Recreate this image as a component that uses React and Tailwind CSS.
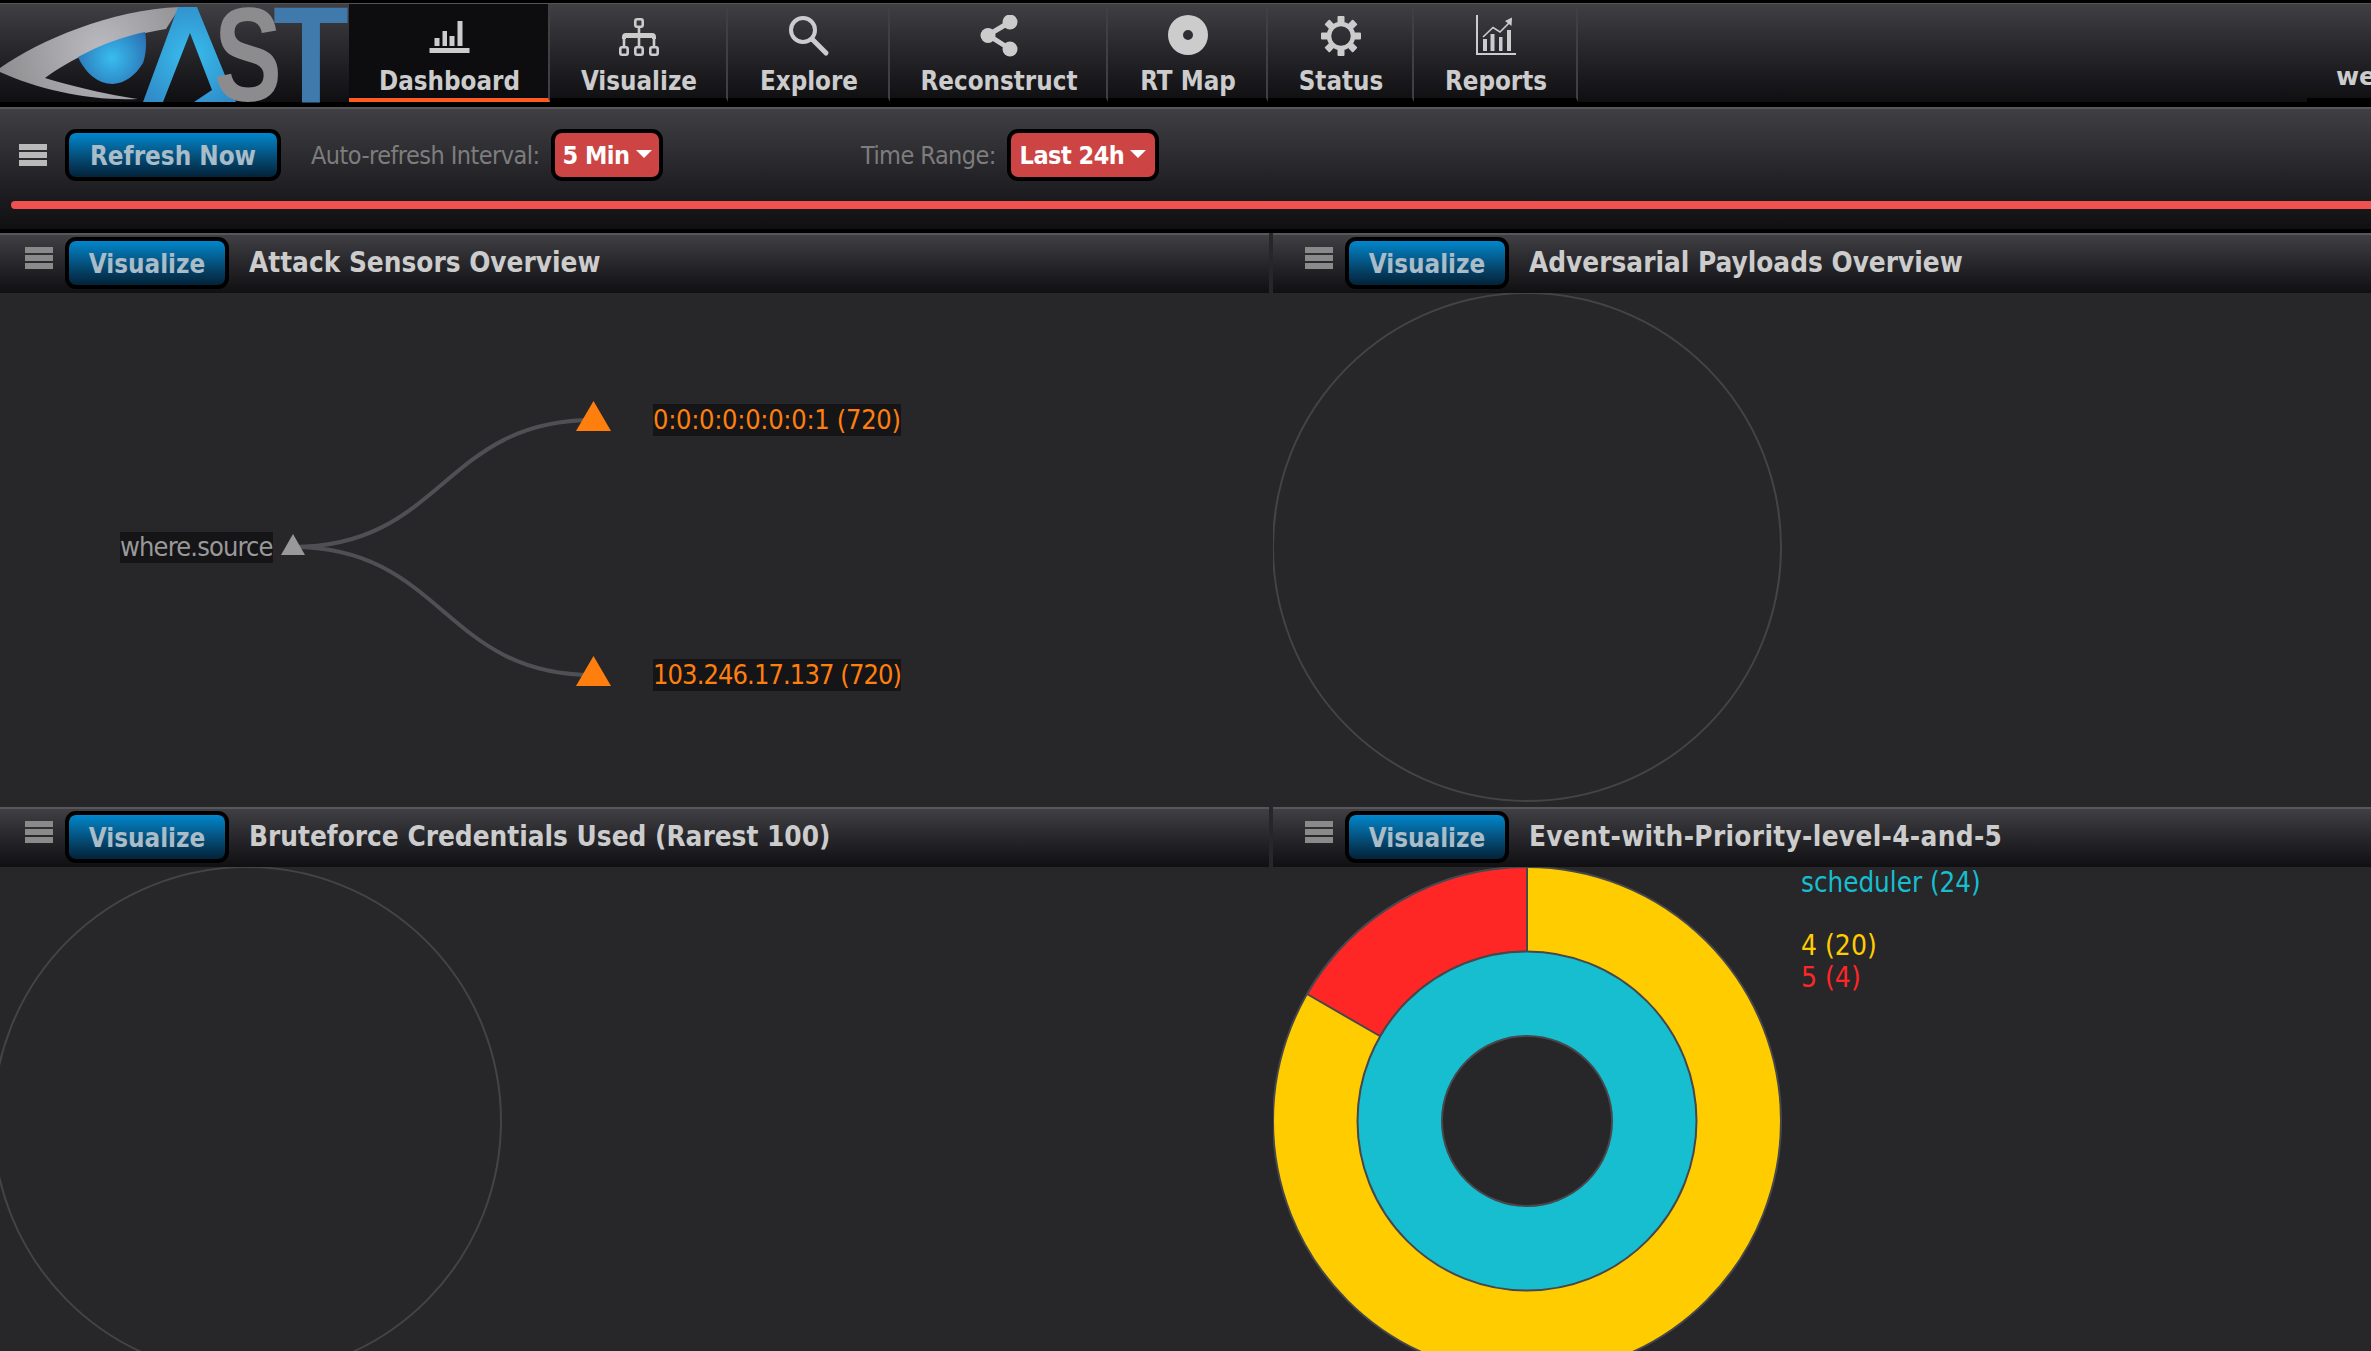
import React from "react";

const FONT = "font-['DejaVu_Sans_Condensed','DejaVu_Sans',sans-serif]";

function Icon({ children }) {
  return (
    <svg viewBox="0 0 44 42" className="w-[44px] h-[42px] block" fill="#cccccc" stroke="none">
      {children}
    </svg>
  );
}

const BarsIcon = () => (
  <Icon>
    <rect x="1.5" y="33" width="40" height="5" />
    <rect x="6.5" y="23" width="5" height="8" />
    <rect x="14.5" y="16" width="4.5" height="15" />
    <rect x="21.5" y="21" width="5" height="10" />
    <rect x="29.5" y="6" width="5" height="25" />
  </Icon>
);
const SitemapIcon = () => (
  <Icon>
    <g fill="none" stroke="#cccccc" strokeWidth="2.6">
      <rect x="18.3" y="4.3" width="7.4" height="7.4" rx="1.6" />
      <rect x="3.3" y="32.3" width="7.4" height="7.4" rx="1.6" />
      <rect x="18.3" y="32.3" width="7.4" height="7.4" rx="1.6" />
      <rect x="33.3" y="32.3" width="7.4" height="7.4" rx="1.6" />
      <path d="M22 12V31M7 31V23M37 31V23" />
    </g>
    <path d="M9 18H35Q39 18 39 22V24H35V23H9V24H5V22Q5 18 9 18Z" />
  </Icon>
);
const SearchIcon = () => (
  <Icon>
    <g fill="none" stroke="#cccccc">
      <circle cx="16" cy="15" r="12" strokeWidth="4" />
      <path d="M25.5 24.5L39 38" strokeWidth="5" strokeLinecap="round" />
    </g>
  </Icon>
);
const ShareIcon = () => (
  <Icon>
    <path d="M33 7L11 20L33 34" fill="none" stroke="#cccccc" strokeWidth="5" />
    <circle cx="33" cy="7" r="7.5" />
    <circle cx="11" cy="20.5" r="7.5" />
    <circle cx="33" cy="34" r="7.5" />
  </Icon>
);
const DiscIcon = () => (
  <Icon>
    <path
      fillRule="evenodd"
      d="M22 0a20 20 0 1 0 0 40a20 20 0 1 0 0-40ZM22 15a5 5 0 1 1 0 10a5 5 0 1 1 0-10Z"
    />
  </Icon>
);
const GearIcon = () => (
  <Icon>
    <circle cx="22" cy="21" r="12" fill="none" stroke="#cccccc" strokeWidth="4.5" />
    {[0, 45, 90, 135, 180, 225, 270, 315].map((a) => (
      <rect key={a} x="18.5" y="1" width="7" height="7" rx="1" transform={`rotate(${a} 22 21)`} />
    ))}
  </Icon>
);
const ReportsIcon = () => (
  <Icon>
    <rect x="2" y="0" width="2" height="40" />
    <rect x="2" y="38" width="40" height="2" />
    <rect x="9" y="24" width="4" height="12" />
    <rect x="16.5" y="19" width="4" height="17" />
    <rect x="25" y="22" width="3.5" height="14" />
    <rect x="33" y="15" width="4" height="21" />
    <path d="M9 22L19 12.5L26 17L36 7" fill="none" stroke="#cccccc" strokeWidth="1.6" />
    <path d="M31 6L38 2.5L37.5 11Z" />
  </Icon>
);

const NAV = [
  { label: "Dashboard", w: "w-[201px]", icon: <BarsIcon />, active: true },
  { label: "Visualize", w: "w-[178px]", icon: <SitemapIcon /> },
  { label: "Explore", w: "w-[162px]", icon: <SearchIcon /> },
  { label: "Reconstruct", w: "w-[218px]", icon: <ShareIcon /> },
  { label: "RT Map", w: "w-[160px]", icon: <DiscIcon /> },
  { label: "Status", w: "w-[146px]", icon: <GearIcon /> },
  { label: "Reports", w: "w-[164px]", icon: <ReportsIcon /> },
];

function Logo() {
  return (
    <svg viewBox="0 0 349 99" className="w-[349px] h-[99px] block shrink-0">
      <defs>
        <radialGradient id="gEye" gradientUnits="userSpaceOnUse" cx="100" cy="45" r="110">
          <stop offset="0" stopColor="#b9b9bf" />
          <stop offset="1" stopColor="#8b8b8d" />
        </radialGradient>
        <radialGradient id="gIris" gradientUnits="userSpaceOnUse" cx="112" cy="54" r="42">
          <stop offset="0" stopColor="#38bdf0" />
          <stop offset="1" stopColor="#2a6cae" />
        </radialGradient>
        <radialGradient id="gA" gradientUnits="userSpaceOnUse" cx="190" cy="52" r="70">
          <stop offset="0" stopColor="#38bdee" />
          <stop offset="1" stopColor="#2f82c0" />
        </radialGradient>
        <radialGradient id="gS" gradientUnits="userSpaceOnUse" cx="255" cy="50" r="55">
          <stop offset="0" stopColor="#c4c4ca" />
          <stop offset="1" stopColor="#8c8c8e" />
        </radialGradient>
        <radialGradient id="gT" gradientUnits="userSpaceOnUse" cx="311" cy="52" r="55">
          <stop offset="0" stopColor="#38c0f0" />
          <stop offset="1" stopColor="#4079ab" />
        </radialGradient>
      </defs>
      <path
        d="M0 64C40 36 110 6 180 3L166 25C120 32 78 50 45 74C70 82 110 91 138 95C90 97 40 86 0 68Z"
        fill="url(#gEye)"
      />
      <path
        d="M78 53C100 41 125 32 145 28C147 38 146 51 143 59C135 72 125 79 113 80C97 80 85 68 78 53Z"
        fill="url(#gIris)"
      />
      <polygon points="178,3 197,3 236,98 194,98 212,86 190,29 163,98 143,98" fill="url(#gA)" />
      <text
        transform="translate(214,96.5) scale(0.76,1)"
        fontFamily="'Liberation Sans',sans-serif"
        fontWeight="700"
        fontSize="134"
        fill="url(#gS)"
      >
        S
      </text>
      <text
        transform="translate(273,98) scale(0.9,1)"
        fontFamily="'Liberation Sans',sans-serif"
        fontWeight="700"
        fontSize="138"
        fill="url(#gT)"
      >
        T
      </text>
    </svg>
  );
}

function NavItem({ item }) {
  const under = item.active ? "border-b-[#ff5a1f] bg-[#0d0d0f]" : "border-b-black";
  return (
    <div
      className={`${item.w} h-full flex flex-col items-center pt-[11px] pl-[2px] border-b-4 ${under} border-r-2 border-r-[#404043] box-border`}
    >
      {item.icon}
      <span className="mt-[9px] text-[25.7px] leading-[30px] font-bold text-[#cccccc] whitespace-nowrap">
        {item.label}
      </span>
    </div>
  );
}

function Hamburger({ light }) {
  const c = light ? "bg-[#b9b9b9]" : "bg-[#8a8a8a]";
  return (
    <div className="w-[28px] h-[22px] flex flex-col gap-[2px] shrink-0">
      <div className={`h-[6px] ${c}`} />
      <div className={`h-[6px] ${c}`} />
      <div className={`h-[6px] ${c}`} />
    </div>
  );
}

function BlueButton({ children, w }) {
  return (
    <div
      className={`${w} h-[52px] shrink-0 rounded-[11px] border-4 border-black bg-linear-to-b from-[#0087cc] to-[#03233a] flex items-center justify-center pt-[2px] text-[25.8px] font-bold text-[#a9bcc8] box-border`}
    >
      {children}
    </div>
  );
}

function RedButton({ children, w }) {
  return (
    <div
      className={`${w} h-[52px] shrink-0 rounded-[11px] border-4 border-black bg-[#cc4444] flex items-center justify-center gap-[6px] pt-[2px] text-[25px] tracking-[-0.5px] font-bold text-white box-border`}
    >
      <span>{children}</span>
      <span className="w-0 h-0 border-x-[8px] border-x-transparent border-t-[8px] border-t-white mb-[5px]" />
    </div>
  );
}

function PanelHeader({ title, right, extra }) {
  return (
    <div className="h-[60px] border-t-2 border-[#56565b] bg-linear-to-b from-[#403f44] to-[#101013] flex items-start box-border shrink-0">
      <div className={right ? "ml-[32px] mt-[12px]" : "ml-[25px] mt-[12px]"}>
        <Hamburger />
      </div>
      <div className="ml-[12px] mt-[2px]">
        <BlueButton w="w-[164px]">Visualize</BlueButton>
      </div>
      <span
        className={`${right ? "ml-[20px]" : "ml-[20px]"} mt-[10px] ${extra || ""} text-[27.7px] leading-[36px] font-bold text-[#cccccc] whitespace-nowrap`}
      >
        {title}
      </span>
    </div>
  );
}

function TreeChart() {
  return (
    <>
      <svg className="absolute inset-0 w-full h-full" viewBox="0 0 1269 514">
        <path d="M293 254C443 254 443 127 593 127" fill="none" stroke="#505054" strokeWidth="4" />
        <path d="M293 254C443 254 443 382 593 382" fill="none" stroke="#505054" strokeWidth="4" />
        <polygon points="293,241 305,262 281,262" fill="#999999" />
        <polygon points="593.5,108 611,138 576,138" fill="#ff7f0e" />
        <polygon points="593.5,363 611,393 576,393" fill="#ff7f0e" />
      </svg>
      <span className="absolute left-[120px] top-[239px] h-[31px] w-[153px] bg-[#151517] text-[#999999] text-[27px] tracking-[-0.85px] leading-[30px] whitespace-nowrap">
        where.source
      </span>
      <span className="absolute left-[653px] top-[111px] h-[32px] w-[248px] bg-[#151517] text-[#ff7f0e] text-[27px] tracking-[-0.3px] leading-[32px] whitespace-nowrap">
        0:0:0:0:0:0:0:1 (720)
      </span>
      <span className="absolute left-[653px] top-[366px] h-[32px] w-[248px] bg-[#151517] text-[#ff7f0e] text-[27px] tracking-[-0.9px] leading-[32px] whitespace-nowrap">
        103.246.17.137 (720)
      </span>
    </>
  );
}

function EmptyCircle({ cx, cy }) {
  return (
    <svg className="absolute inset-0 w-full h-full">
      <circle cx={cx} cy={cy} r="254" fill="none" stroke="#444447" strokeWidth="2" />
    </svg>
  );
}

function Donut() {
  const cx = 254;
  const cy = 254;
  const stroke = "#47474c";
  const sx = (r, deg) => cx + r * Math.sin((deg * Math.PI) / 180);
  const sy = (r, deg) => cy - r * Math.cos((deg * Math.PI) / 180);
  const red = `M${sx(254, -60)} ${sy(254, -60)}A254 254 0 0 1 ${cx} ${cy - 254}L${cx} ${cy - 169.5}A169.5 169.5 0 0 0 ${sx(169.5, -60)} ${sy(169.5, -60)}Z`;
  return (
    <>
      <svg className="absolute inset-0 w-full h-full">
        <circle cx={cx} cy={cy} r="254" fill="#ffcc00" stroke={stroke} strokeWidth="2" />
        <path d={red} fill="#ff2626" stroke={stroke} strokeWidth="2" />
        <circle cx={cx} cy={cy} r="169.5" fill="#17becf" stroke={stroke} strokeWidth="2" />
        <circle cx={cx} cy={cy} r="85" fill="#27272a" stroke={stroke} strokeWidth="2" />
      </svg>
      <span className="absolute left-[528px] top-[-1px] text-[27.5px] leading-[32px] text-[#17becf] whitespace-nowrap">
        scheduler (24)
      </span>
      <span className="absolute left-[528px] top-[63px] text-[28px] leading-[32px] text-[#ffcc00] whitespace-nowrap">
        4 (20)
      </span>
      <span className="absolute left-[528px] top-[95px] text-[28px] leading-[32px] text-[#ff2626] whitespace-nowrap">
        5 (4)
      </span>
    </>
  );
}

function Panel({ title, right, h, extra, children }) {
  return (
    <div className={`${h} flex flex-col overflow-hidden`}>
      <PanelHeader title={title} right={right} extra={extra} />
      <div className="relative flex-1 overflow-hidden bg-[#27272a]">{children}</div>
    </div>
  );
}

export default function App() {
  return (
    <div className={`w-[2371px] h-[1351px] overflow-hidden bg-[#27272a] ${FONT}`}>
      <header className="h-[107px] bg-black pt-[3px] box-border">
        <div className="h-[99px] flex border-t border-[#555558] bg-linear-to-b from-[#403f44] to-[#0f0f12] box-border">
          <Logo />
          {NAV.map((item) => (
            <NavItem key={item.label} item={item} />
          ))}
          <div className="ml-auto self-stretch w-[64px] border-b-4 border-black pl-[29px] pt-[57px] overflow-hidden box-border">
            <span className="font-['DejaVu_Sans',sans-serif] text-[25px] leading-[32px] font-bold text-[#cccccc]">we</span>
          </div>
        </div>
      </header>

      <div className="h-[126px] border-t-2 border-b-4 border-t-[#56565a] border-b-black bg-linear-to-b from-[#403f44] to-[#101013] box-border">
        <div className="flex items-center pt-[20px] pl-[19px]">
          <Hamburger light />
          <div className="ml-[18px]">
            <BlueButton w="w-[216px]">Refresh Now</BlueButton>
          </div>
          <span className="ml-[30px] w-[240px] pt-[2px] text-[25px] tracking-[-0.55px] text-[#7d7d7d] whitespace-nowrap">
            Auto-refresh Interval:
          </span>
          <RedButton w="w-[112px]">5 Min</RedButton>
          <span className="ml-[198px] w-[146px] pt-[2px] text-[25px] tracking-[-0.55px] text-[#7d7d7d] whitespace-nowrap">
            Time Range:
          </span>
          <RedButton w="w-[152px]">Last 24h</RedButton>
        </div>
        <div className="mt-[20px] ml-[11px] h-[8px] rounded-l-[4px] bg-[#ef5050]" />
      </div>

      <div className="grid grid-cols-[1269px_1098px] gap-x-[4px]">
        <Panel title="Attack Sensors Overview" h="h-[574px]">
          <TreeChart />
        </Panel>
        <Panel title="Adversarial Payloads Overview" right h="h-[574px]">
          <EmptyCircle cx="254" cy="254" />
        </Panel>
        <Panel title="Bruteforce Credentials Used (Rarest 100)" h="h-[544px]">
          <EmptyCircle cx="247" cy="254" />
        </Panel>
        <Panel title="Event-with-Priority-level-4-and-5" right extra="tracking-[0.33px]" h="h-[544px]">
          <Donut />
        </Panel>
      </div>
    </div>
  );
}
